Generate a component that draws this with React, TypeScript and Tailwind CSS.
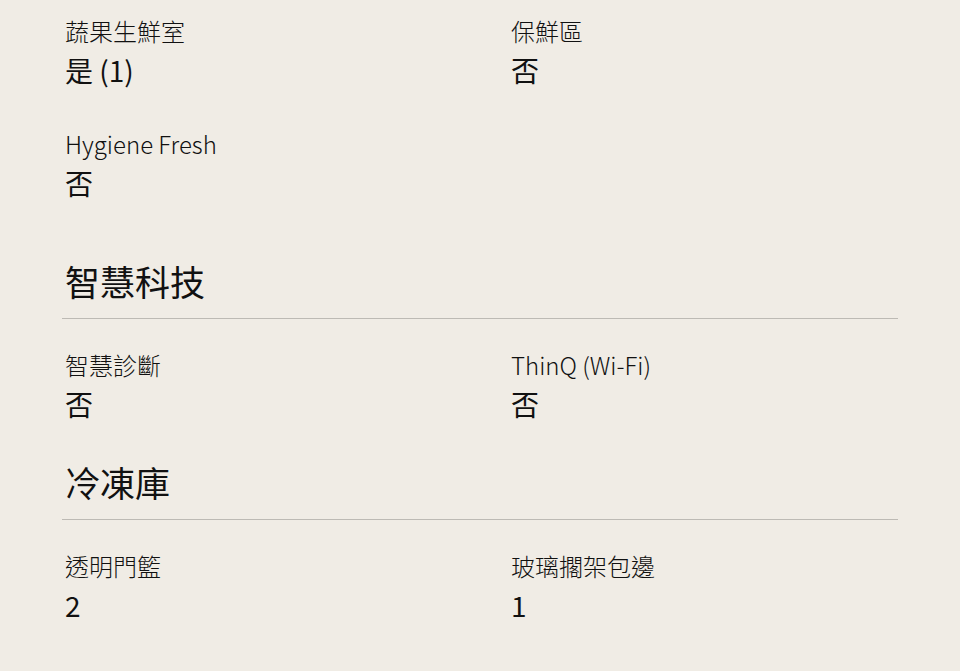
const font = { fontFamily: '"Noto Sans CJK TC", "Noto Sans", sans-serif' };

type Spec = { label: string; value: string };

function Item({ label, value }: Spec) {
  return (
    <div className="flex flex-col">
      <div className="text-[24px] leading-[36px] font-light text-[#111]">{label}</div>
      <div className="mt-px text-[28px] leading-[40px] text-[#111]">{value}</div>
    </div>
  );
}

function Heading({ children }: { children: string }) {
  return (
    <div className="border-b border-[#bdbab4] pb-[15px]">
      <h2 className="pl-[3px] text-[35px] leading-[44px] text-[#111]">{children}</h2>
    </div>
  );
}

export default function App() {
  return (
    <div className="min-h-[671px] w-full bg-[#f0ece5]" style={font}>
      <div className="w-[836px] ml-[62px] pt-[13px]">
        <div className="grid grid-cols-[446px_1fr] gap-y-[36px] pl-[3px]">
          <Item label="蔬果生鮮室" value="是 (1)" />
          <Item label="保鮮區" value="否" />
          <Item label="Hygiene Fresh" value="否" />
        </div>

        <div className="mt-[56px]">
          <Heading>智慧科技</Heading>
        </div>
        <div className="grid grid-cols-[446px_1fr] pl-[3px] mt-[28px]">
          <Item label="智慧診斷" value="否" />
          <Item label="ThinQ (Wi-Fi)" value="否" />
        </div>

        <div className="mt-[36px]">
          <Heading>冷凍庫</Heading>
        </div>
        <div className="grid grid-cols-[446px_1fr] pl-[3px] mt-[28px]">
          <Item label="透明門籃" value="2" />
          <Item label="玻璃擱架包邊" value="1" />
        </div>
      </div>
    </div>
  );
}
